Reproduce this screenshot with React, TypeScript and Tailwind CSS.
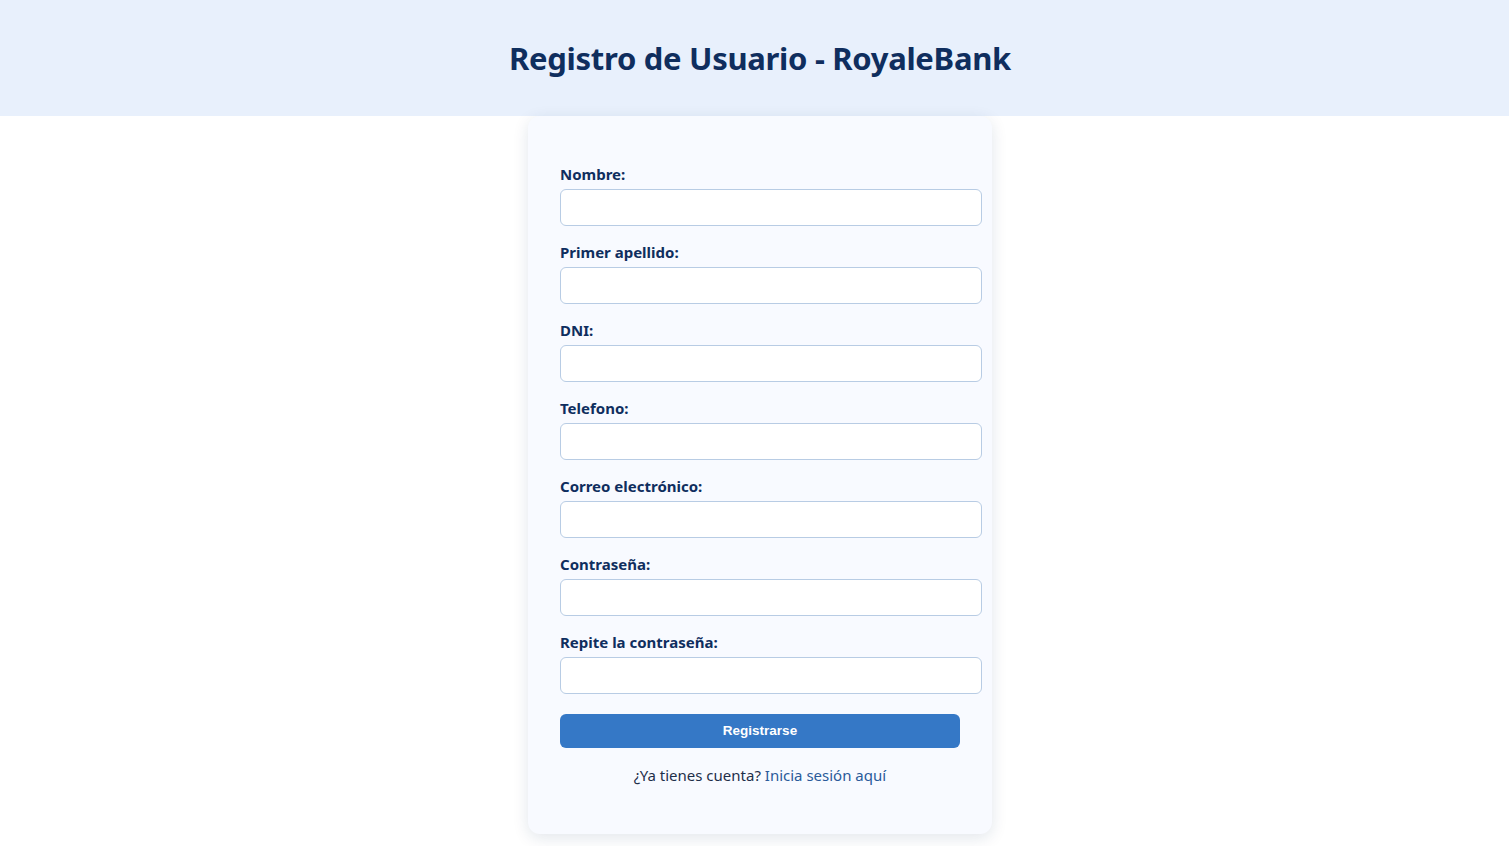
const fields = [
  { id: 'nombre', label: 'Nombre:', type: 'text' },
  { id: 'apellido', label: 'Primer apellido:', type: 'text' },
  { id: 'dni', label: 'DNI:', type: 'text' },
  { id: 'telefono', label: 'Telefono:', type: 'tel' },
  { id: 'email', label: 'Correo electrónico:', type: 'email' },
  { id: 'password', label: 'Contraseña:', type: 'password' },
  { id: 'password2', label: 'Repite la contraseña:', type: 'password' },
];

export default function App() {
  return (
    <div className="min-h-screen bg-white font-['Noto_Sans',sans-serif]">
      {/* Header */}
      <header className="h-[116px] bg-[#e8f0fc] flex items-center justify-center pl-[11px]">
        <h1 className="text-[31px] font-bold text-[#0f2e5e] tracking-[-0.3px]">
          Registro de Usuario - RoyaleBank
        </h1>
      </header>

      {/* Form card */}
      <div className="flex justify-center pl-[11px]">
        <form className="w-[464px] bg-[#f8faff] rounded-xl shadow-[0_4px_16px_rgba(15,46,94,0.12)] px-8 pt-[48px] pb-[47px]">
          {fields.map((f) => (
            <div key={f.id} className="mb-[16px]">
              <label htmlFor={f.id} className="block text-[15px] font-bold text-[#0f2e5e] leading-[20px] mb-[5px]">
                {f.label}
              </label>
              <input
                id={f.id}
                type={f.type}
                className="block w-[422px] h-[37px] px-[10px] bg-white border border-[#b8cce4] rounded-md outline-none"
              />
            </div>
          ))}

          <button
            type="button"
            className="w-full h-[34px] mt-[4px] rounded-md bg-[#3578c6] text-white text-[13.5px] font-bold font-['Liberation_Sans',sans-serif]"
          >
            Registrarse
          </button>

          <p className="mt-[16px] text-center text-[15px] text-[#1e2f4a]">
            ¿Ya tienes cuenta?{' '}
            <a href="#" className="text-[#2a5a9a]">
              Inicia sesión aquí
            </a>
          </p>
        </form>
      </div>
    </div>
  );
}
